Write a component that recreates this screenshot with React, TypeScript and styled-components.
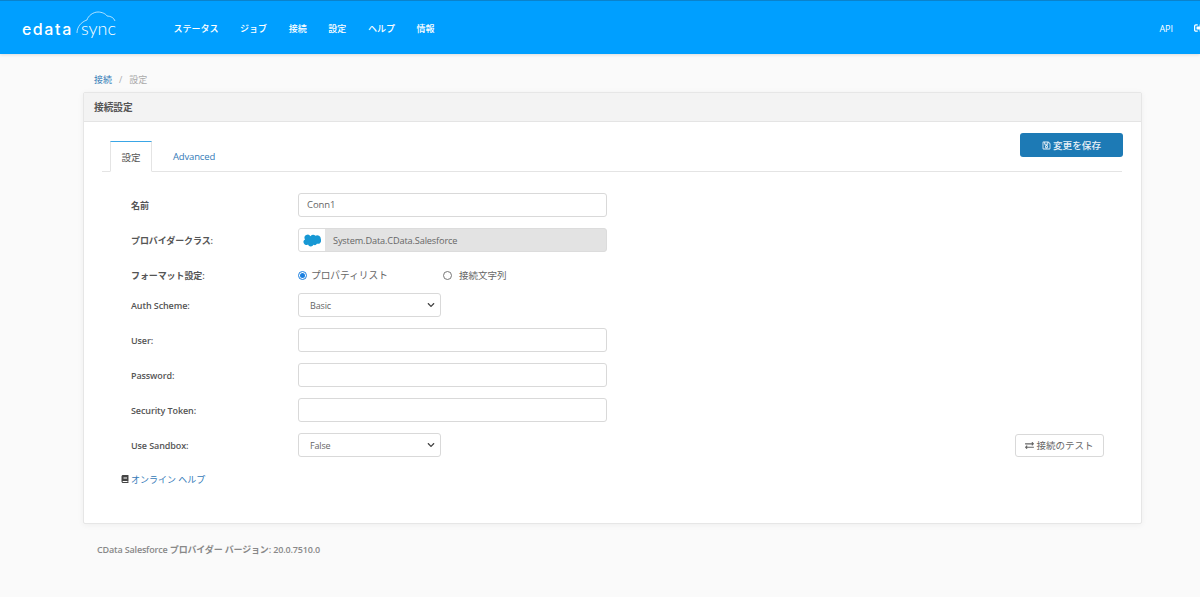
import React from "react";
import styled, { createGlobalStyle } from "styled-components";
import { FaBook, FaExchangeAlt, FaRegSave, FaChevronDown, FaSignOutAlt } from "react-icons/fa";

const Global = createGlobalStyle`
  html, body { margin: 0; padding: 0; background: #fafafa; height: 100%; overflow: hidden; }
  body { font-family: "Open Sans", "Noto Sans CJK JP", sans-serif; font-size: 9px; color: #555; }
  * { box-sizing: border-box; }
`;

const Page = styled.div`width: 1200px; height: 597px; overflow: hidden;`;
const Nav = styled.header`
  height: 54px; background: #009fff; border-top: 1px solid #0a82cc;
  box-shadow: 0 1px 3px rgba(0,0,0,.12);
  display: flex; align-items: center; padding-left: 22px; color: #fff; position: relative;
`;
const Logo = styled.div`width: 151.5px; height: 36px; position: relative; display: flex; align-items: center; flex: none; color: #fff;`;
const LogoData = styled.span`
  font: 500 16px/1 Inter, sans-serif; letter-spacing: 1.6px; width: 51px; margin-top: 2px; position: relative;
  &::before { content: ""; position: absolute; left: 2px; top: 8px; width: 7px; height: 1.2px; background: #fff; }
`;
const LogoSync = styled.span`font: 300 18px/1 Lato, sans-serif; margin-left: 8px; margin-top: 1px;`;
const LogoCloud = styled.svg`position: absolute; left: 0; top: 0;`;
const Menu = styled.nav`display: flex; gap: 21.6px; font-size: 9px; font-weight: 500; flex: 1; padding-top: 1px;`;
const Right = styled.div`display: flex; gap: 21px; align-items: center; font-size: 9px; font-weight: 500; margin-right: -4px; padding-top: 1px;`;

const Crumbs = styled.div`height: 38px; padding: 19px 0 0 94px; font-size: 9px; line-height: 13px; color: #aaa; display: flex; gap: 7px;`;
const CrumbLink = styled.a`color: #337ab7;`;
const Card = styled.section`
  margin-left: 83px; width: 1059px; height: 432px; background: #fff; border: 1px solid #e6e6e6; border-radius: 2px;
  box-shadow: 0 1px 6px rgba(0,0,0,.05); display: flex; flex-direction: column;
`;
const CardHead = styled.div`height: 29px; background: #f3f3f3; border-bottom: 1px solid #e4e4e4; padding-left: 10px; display: flex; align-items: center; font-size: 9.7px; font-weight: 700; color: #555;`;
const CardBody = styled.div`padding: 11px 19px 0 18px;`;
const TabBar = styled.div`height: 39px; border-bottom: 1px solid #e4e4e4; display: flex; align-items: flex-end; padding-left: 8px; position: relative;`;
const Tab = styled.div<{ $active?: boolean }>`
  height: 31px; width: 42px; display: flex; align-items: center; justify-content: center; margin-bottom: -1px; font-size: 9.5px;
  ${p => p.$active
    ? "background:#fff;border:1px solid #e4e4e4;border-bottom-color:#fff;border-top:1px solid #3aa6e6;color:#555;"
    : "color:#337ab7;margin-left:20px;width:44px;letter-spacing:-.15px;"}
`;
const SaveButton = styled.button`
  position: absolute; right: -1px; top: 0; width: 103px; height: 24px; background: #1d7ab5; color: #e8f1f7; border: 0; border-radius: 3px;
  font: 500 9.6px "Open Sans", "Noto Sans CJK JP", sans-serif; display: flex; align-items: center; justify-content: center; gap: 2px;
`;
const Form = styled.div`padding: 21px 18px 0 29px; display: flex; flex-direction: column;`;
const Row = styled.div<{ $gap?: number }>`display: grid; grid-template-columns: 167px 1fr auto; align-items: center; height: 24px; margin-top: ${p => p.$gap ?? 0}px;`;
const Label = styled.label`font-size: 9px; font-weight: 600; color: #555; letter-spacing: -.1px;`;
const TextInput = styled.div`width: 309px; height: 24px; border: 1px solid #d9d9d9; border-radius: 3px; background: #fff; padding-left: 8px; line-height: 22px; font-size: 9.5px; letter-spacing: -.1px; color: #666;`;
const ProviderBox = styled.div`width: 309px; height: 24px; border: 1px solid #dcdcdc; border-radius: 3px; background: #e3e3e3; display: flex; align-items: center; font-size: 9.2px; letter-spacing: -.14px; color: #666; overflow: hidden;`;
const ProviderIcon = styled.div`width: 26px; height: 100%; background: #fff; display: flex; align-items: center; justify-content: center; margin-right: 8px;`;
const Select = styled.div`width: 143px; height: 24px; border: 1px solid #d9d9d9; border-radius: 3px; background: #fff; padding: 0 5px 0 11px; display: flex; align-items: center; justify-content: space-between; font-size: 9px; letter-spacing: -.15px; color: #666;`;
const Radios = styled.div`display: flex; align-items: center; color: #666;`;
const RadioItem = styled.span<{ $w: number; $size: number; $gap: number }>`display: inline-flex; align-items: center; gap: ${p => p.$gap}px; width: ${p => p.$w}px; font-size: ${p => p.$size}px;`;
const Radio = styled.span<{ $on?: boolean }>`
  width: 9px; height: 9px; border-radius: 50%; border: 1px solid ${p => p.$on ? "#1a7fe0" : "#777"}; background: #fff; display: inline-flex; align-items: center; justify-content: center;
  &::after { content: ""; width: 5px; height: 5px; border-radius: 50%; background: ${p => p.$on ? "#1a7fe0" : "transparent"}; }
`;
const TestButton = styled.button`
  width: 89px; height: 23px; background: #fff; border: 1px solid #d9d9d9; border-radius: 3px; color: #666;
  font: 400 9.5px "Open Sans", "Noto Sans CJK JP", sans-serif; display: flex; align-items: center; justify-content: center; gap: 2px; padding: 0;
`;
const Help = styled.a`display: flex; align-items: center; gap: 2px; margin: 15px 0 0 -10px; color: #337ab7; font-size: 9px; height: 14px;`;
const Version = styled.div`margin: 19px 0 0 97px; font-size: 9px; font-weight: 600; color: #888; line-height: 13px; letter-spacing: -.16px;`;

const Chevron = () => <FaChevronDown size={8} color="#444" />;

export default function App() {
  return (
    <Page>
      <Global />
      <Nav>
        <Logo>
          <LogoData>cdata</LogoData>
          <LogoSync>sync</LogoSync>
          <LogoCloud width="100" height="30" viewBox="0 0 100 30" fill="none" stroke="#fff" strokeWidth=".8" strokeOpacity=".85">
            <path d="M55 23c0-6 4-11 10-13 1-4 6-8 11-8 4 0 8 2 9 4 4 0 7 2 8 5" />
          </LogoCloud>
        </Logo>
        <Menu>
          <span>ステータス</span><span>ジョブ</span><span>接続</span><span>設定</span><span>ヘルプ</span><span>情報</span>
        </Menu>
        <Right><span>API</span><FaSignOutAlt size={10} /></Right>
      </Nav>
      <Crumbs><CrumbLink>接続</CrumbLink><span>/</span><span>設定</span></Crumbs>
      <Card>
        <CardHead>接続設定</CardHead>
        <CardBody>
          <TabBar>
            <Tab $active>設定</Tab>
            <Tab>Advanced</Tab>
            <SaveButton><FaRegSave size={9} /> 変更を保存</SaveButton>
          </TabBar>
          <Form>
            <Row><Label>名前</Label><TextInput>Conn1</TextInput></Row>
            <Row $gap={11}>
              <Label>プロバイダークラス:</Label>
              <ProviderBox>
                <ProviderIcon>
                  <svg width="18" height="13" viewBox="0 0 18 13"><path fill="#1798d4" d="M7.4 2.2A3.1 3.1 0 0 1 12.4 1.8a3.6 3.6 0 0 1 5.4 3.3 3.3 3.3 0 0 1-3.9 4.6 2.5 2.5 0 0 1-3.4 1 3 3 0 0 1-5.5-.2A2.8 2.8 0 0 1 2 5.4a3.1 3.1 0 0 1 5.4-3.2z" /></svg>
                </ProviderIcon>
                System.Data.CData.Salesforce
              </ProviderBox>
            </Row>
            <Row $gap={11}>
              <Label>フォーマット設定:</Label>
              <Radios>
                <RadioItem $w={145} $size={9.7} $gap={4}><Radio $on />プロパティリスト</RadioItem>
                <RadioItem $w={90} $size={9.5} $gap={7}><Radio />接続文字列</RadioItem>
              </Radios>
            </Row>
            <Row $gap={6}><Label>Auth Scheme:</Label><Select>Basic<Chevron /></Select></Row>
            <Row $gap={11}><Label>User:</Label><TextInput /></Row>
            <Row $gap={11}><Label>Password:</Label><TextInput /></Row>
            <Row $gap={11}><Label>Security Token:</Label><TextInput /></Row>
            <Row $gap={11}>
              <Label>Use Sandbox:</Label>
              <Select>False<Chevron /></Select>
              <TestButton><FaExchangeAlt size={9} /> 接続のテスト</TestButton>
            </Row>
            <Help><FaBook size={8} color="#444" />オンライン ヘルプ</Help>
          </Form>
        </CardBody>
      </Card>
      <Version>CData Salesforce プロバイダー バージョン: 20.0.7510.0</Version>
    </Page>
  );
}
